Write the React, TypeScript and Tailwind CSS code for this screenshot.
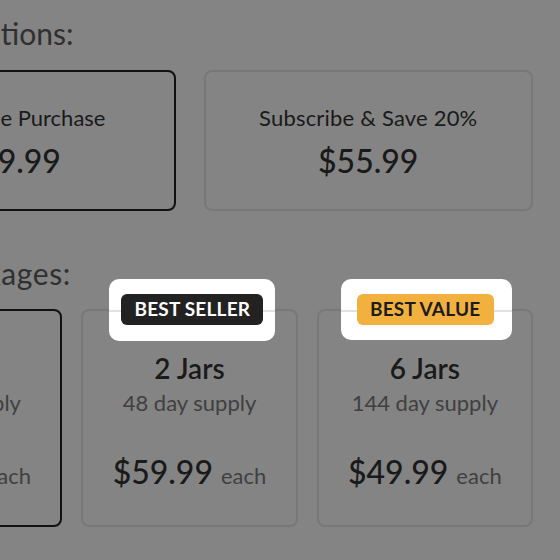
import React from "react";

type Pack = {
  title: string;
  supply: string;
  price: string;
  selected?: boolean;
  badge?: "seller" | "value";
};

const packs: Pack[] = [
  { title: "1 Jar", supply: "24 day supply", price: "$69.99", selected: true },
  { title: "2 Jars", supply: "48 day supply", price: "$59.99", badge: "seller" },
  { title: "6 Jars", supply: "144 day supply", price: "$49.99", badge: "value" },
];

function Badge({ kind }: { kind: "seller" | "value" }) {
  const seller = kind === "seller";
  return (
    <div
      className={
        seller
          ? "absolute left-[26px] -top-[32px] w-[166px] h-[62px] bg-white rounded-[10px]"
          : "absolute left-[22px] -top-[32px] w-[171px] h-[61px] bg-white rounded-[10px]"
      }
    >
      {/* card border seen through the highlight */}
      <div className="absolute left-0 right-0 top-[31px] h-[2px] bg-[#e2e2e2]" />
      <div
        className={
          seller
            ? "absolute left-[12px] top-[15px] w-[142px] h-[31px] rounded-[6px] bg-[#222222] text-white flex items-center justify-center"
            : "absolute left-[16px] top-[15px] w-[137px] h-[31px] rounded-[6px] bg-[#f2b13f] text-[#1c1c1c] flex items-center justify-center"
        }
      >
        <span className="text-[19px] font-bold tracking-[0.2px]">
          {seller ? "BEST SELLER" : "BEST VALUE"}
        </span>
      </div>
    </div>
  );
}

export default function App() {
  return (
    <div
      className="w-[560px] h-[560px] overflow-hidden bg-[#848484] text-[#1a1a1a]"
      style={{ fontFamily: "Lato, 'Open Sans', sans-serif" }}
    >
      <div className="ml-[-154px] w-[687px] flex flex-col">
        <h2 className="mt-[14px] ml-[-13px] text-[30px] leading-[38px] text-[#303030]">
          Purchase Options:
        </h2>

        <div className="mt-[18px] grid grid-cols-2 gap-[28px]">
          <div className="h-[141px] rounded-[8px] border-2 border-[#111] flex flex-col items-center justify-center">
            <div className="text-[22px] leading-[28px]">One-Time Purchase</div>
            <div className="mt-[12px] text-[32px] leading-[34px] font-medium">$69.99</div>
          </div>
          <div className="h-[141px] rounded-[8px] border-2 border-[#787878] flex flex-col items-center justify-center">
            <div className="text-[22px] leading-[28px] tracking-[0.2px]">Subscribe &amp; Save 20%</div>
            <div className="mt-[12px] text-[32px] leading-[34px] font-medium">$55.99</div>
          </div>
        </div>

        <h2 className="mt-[43px] ml-[-1px] text-[30px] leading-[38px] tracking-[0.6px] text-[#303030]">
          Select Packages:
        </h2>

        <div className="mt-[17px] grid grid-cols-3 gap-[19px]">
          {packs.map((p) => (
            <div
              key={p.title}
              className={
                p.selected
                  ? "relative h-[218px] rounded-[8px] border-2 border-[#111] flex flex-col items-center"
                  : "relative h-[218px] rounded-[8px] border-2 border-[#787878] flex flex-col items-center"
              }
            >
              {p.badge && <Badge kind={p.badge} />}
              <div className="mt-[40px] text-[28px] leading-[34px] font-semibold">{p.title}</div>
              <div className="mt-[3px] text-[22px] leading-[30px] text-[#404040]">{p.supply}</div>
              <div className="mt-[34px] flex items-baseline gap-[8px]">
                <span className="text-[32px] leading-[40px] font-medium">{p.price}</span>
                <span className="text-[22px] text-[#404040]">each</span>
              </div>
            </div>
          ))}
        </div>
      </div>
    </div>
  );
}
